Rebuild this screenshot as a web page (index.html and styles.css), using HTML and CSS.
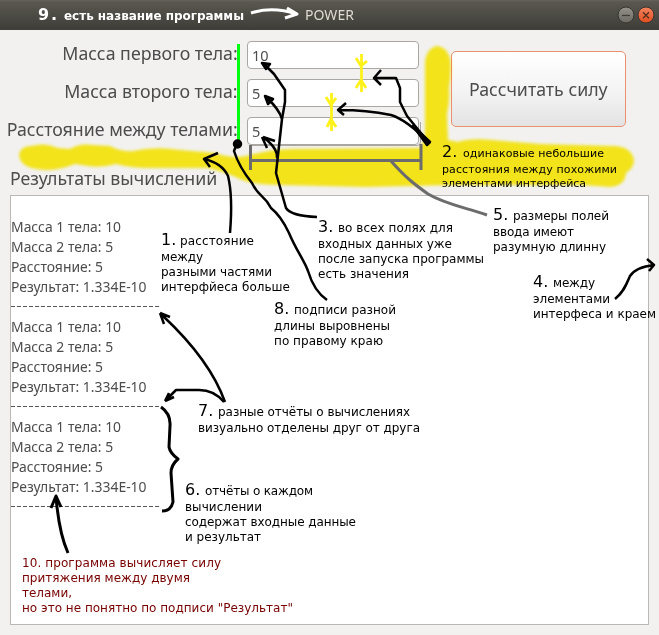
FILE: index.html
```html
<!DOCTYPE html>
<html lang="ru">
<head>
<meta charset="utf-8">
<title>POWER</title>
<link rel="stylesheet" href="styles.css">
</head>
<body>
<div class="window">
  <header class="titlebar">
    <span class="title">POWER</span>
    <svg class="controls" width="38" height="18" viewBox="0 0 38 18">
      <defs>
        <linearGradient id="grey" x2="0" y2="1"><stop stop-color="#94928b"/><stop offset="1" stop-color="#6b6962"/></linearGradient>
        <linearGradient id="orange" x2="0" y2="1"><stop stop-color="#f58461"/><stop offset="1" stop-color="#e04d1d"/></linearGradient>
      </defs>
      <circle cx="9" cy="9" r="8" fill="url(#grey)" stroke="#35342f"/>
      <path d="M5 9.5h8" stroke="#3c3b37" stroke-width="1.2"/>
      <circle cx="29" cy="9" r="8" fill="url(#orange)" stroke="#35342f"/>
      <path d="M26 6.2l6 6M32 6.2l-6 6" stroke="#51301f" stroke-width="1.3"/>
    </svg>
  </header>
  <main class="content">
    <div class="form">
      <div class="fields">
        <label class="label"><span class="wide">Масса первого тела:</span></label><div class="field">10</div>
        <label class="label"><span class="wide">Масса второго тела:</span></label><div class="field">5</div>
        <label class="label"><span class="wide">Расстояние между телами:</span></label><div class="field">5</div>
      </div>
      <button class="calculate"><span>Рассчитать силу</span></button>
    </div>
    <h2 class="heading"><span>Результаты вычислений</span></h2>
    <section class="results">
      <div class="report"><p>Масса 1 тела: 10</p><p>Масса 2 тела: 5</p><p>Расстояние: 5</p><p>Результат: 1.334E-10</p><hr></div>
      <div class="report"><p>Масса 1 тела: 10</p><p>Масса 2 тела: 5</p><p>Расстояние: 5</p><p>Результат: 1.334E-10</p><hr></div>
      <div class="report"><p>Масса 1 тела: 10</p><p>Масса 2 тела: 5</p><p>Расстояние: 5</p><p>Результат: 1.334E-10</p><hr></div>
    </section>
  </main>
  <svg class="marker" width="659" height="635" viewBox="0 0 659 635">
    <defs><filter id="soft" x="-10%" y="-10%" width="120%" height="120%"><feGaussianBlur stdDeviation="1.4"/></filter></defs>
    <g filter="url(#soft)" fill="#fff11a">
      <path d="M425 64C425 52 432 46 438 46Q446 47 450 58Q452 70 449 88Q450 102 447 114L448 140L458 142Q470 138 492 140L540 144L613 146Q631 146 634 160Q634 168 626 173Q625 186 610 187Q598 186 580 185L455 185L365 187L280 185Q254 185 240 179Q225 172 208 168L150 168Q130 168 116 164Q102 168 88 166L75 164Q60 170 46 170Q20 169 19 155Q20 146 32 146Q45 142 58 148L70 149Q80 143 92 145L110 146Q120 152 133 151Q155 146 180 150L215 153Q235 160 250 155Q275 148 300 149L420 148Q426 140 425 122Z"/>
    </g>
  </svg>
  <svg class="notes" width="659" height="635" viewBox="0 0 659 635">
    <g class="field-edges"><path d="M420.500 122V142Q420.500 145.500 417 145.500H252"/></g>
    <path class="green" d="M238.500 44V142"/>
    <g class="grey"><path d="M250.500 145V170M421 144V170M250 160.500H421M391 161C405 177 414 184 428 194C445 204 463 207 487 215"/></g>
    <g class="yellow">
      <path d="M361.500 54V92M356 58L361 66L367 61M356 88L361 80L366 88"/>
      <path d="M331.500 93V131M326 97L331 105L336 98M327 127L331 119L336 127"/>
    </g>
    <path class="white" d="M251 13Q273 6 296 14M287 8L297 14L285 18"/>
    <g class="ink">
      <path d="M429 143L407 116L400 102V88L396 78H375M381 70L374 78L381 85"/>
      <path d="M429 142Q405 119 391 115Q366 110 340 110M346 103L338 110L344 115"/>
      <path class="solid" d="M413 126L430 142L427 145Z"/>
      <path d="M317 217Q291 216 286 208L276 173L278 155L282 119L285 102V90L274 74L264 64M262 63l4 6 4-5z"/>
      <path d="M282 119Q279 109 267 98M265 96l3 8 5-5zM277 158Q278 150 268 141L264 138M262 137l5 11M263 137l12 4"/>
      <path d="M230 233Q233 196 228 176Q222 163 204 159M218 153L204 159L210 167"/>
      <circle class="solid" cx="237.500" cy="144" r="3.500"/>
      <path d="M236 146L234 151Q239 167 252 183C259 198 264 194 271 208Q281 216 289 233C296 250 304 260 308 271Q314 291 327 300"/>
      <path d="M225 402Q210 360 163 316M160 313L164 324M160 313L170 317M162 314l5 6"/>
      <path d="M224 402Q214 390 199 390H176L166 400M165 401L169 393M165 401L174 397"/>
      <path class="thick" d="M161 407Q171 414 170 426L169 447Q170 453 178 459Q171 465 171 473L173 502Q171 511 162 511"/>
      <path class="thick" d="M68 553Q59 533 56 497M51 508L56 496L61 507"/>
      <path d="M615 299C624 292 627 283 630 276Q636 267 654 265M647 259L654 265L649 271"/>
    </g>
    <g class="text">
      <g class="title-note"><text class="num" x="38" y="20" textLength="19">9.</text><text x="64" y="20" textLength="180">есть название программы</text></g>
      <text class="num" x="161" y="245">1.</text><text x="180" y="245" textLength="74">расстояние</text>
      <text x="161" y="261" textLength="42">между</text><text x="161" y="276" textLength="111">разными частями</text><text x="161" y="291" textLength="129">интерфйеса больше</text>
      <g class="small"><text class="num" x="442" y="157">2.</text><text x="463" y="157" textLength="141">одинаковые небольшие</text>
      <text x="442" y="173" textLength="175">расстояния между похожими</text><text x="442" y="187" textLength="144">элементами интерфейса</text></g>
      <text class="num" x="318" y="232">3.</text><text x="338" y="232" textLength="115">во всех полях для</text>
      <text x="318" y="248" textLength="134">входных данных уже</text><text x="318" y="263" textLength="166">после запуска программы</text><text x="318" y="278" textLength="91">есть значения</text>
      <text class="num" x="493" y="220">5.</text><text x="513" y="220" textLength="96">размеры полей</text>
      <text x="493" y="236" textLength="81">ввода имеют</text><text x="493" y="251" textLength="113">разумную длинну</text>
      <text class="num" x="533" y="287">4.</text><text x="553" y="287" textLength="42">между</text>
      <text x="533" y="303" textLength="77">элементами</text><text x="533" y="318" textLength="123">интерфеса и краем</text>
      <text class="num" x="274" y="314">8.</text><text x="294" y="314" textLength="102">подписи разной</text>
      <text x="274" y="330" textLength="116">длины выровнены</text><text x="274" y="345" textLength="109">по правому краю</text>
      <text class="num" x="198" y="416">7.</text><text x="218" y="416" textLength="192">разные отчёты о вычислениях</text>
      <text x="198" y="432" textLength="222">визуально отделены друг от друга</text>
      <text class="num" x="185" y="495">6.</text><text x="205" y="495" textLength="108">отчёты о каждом</text>
      <text x="185" y="511" textLength="77">вычислении</text><text x="185" y="526" textLength="171">содержат входные данные</text><text x="185" y="541" textLength="76">и результат</text>
      <g class="red"><text x="22" y="567" textLength="199">10. программа вычисляет силу</text><text x="22" y="582" textLength="168">притяжения между двумя</text><text x="22" y="597" textLength="50">телами,</text><text x="22" y="612" textLength="271">но это не понятно по подписи "Результат"</text></g>
    </g>
  </svg>
</div>
</body>
</html>
```
FILE: styles.css
```css
* { box-sizing: border-box; }
body { margin: 0; background: #2c2b35; font-family: "Noto Sans", sans-serif; color: #4c4c4c; }
.window { position: relative; width: 659px; height: 635px; overflow: hidden; background: #f2f1f0; }
.titlebar { display: grid; grid-template-columns: 1fr auto 1fr; align-items: center; height: 30px; padding-right: 4px; padding-left: 4px; background: linear-gradient(#66645b 0, #59574f 2px, #3e3d38); }
.title { grid-column: 2; font-size: 14px; line-height: 30px; color: #dfdbd2; }
.controls { justify-self: end; }
.content { padding: 11px 10px 10px; }
.form { display: flex; align-items: flex-start; height: 126px; }
.fields { display: grid; grid-template-columns: 229px 172px; grid-template-rows: 28px 28px 28px; column-gap: 9px; row-gap: 10px; }
.label { display: flex; justify-content: flex-end; font-size: 18.500px; line-height: 24px; white-space: nowrap; }
.wide { transform: scaleX(.96); transform-origin: right; }
.fields { margin-left: -1px; }
.field { padding: 0 4px; border: 1px solid #aaa6a2; border-radius: 4px; background: #fff; font-size: 14.500px; line-height: 26px; }
.calculate { width: 175px; height: 76px; margin: 10px 0 0 32px; padding: 0; border: 1.500px solid #e9906f; border-radius: 5px; background: linear-gradient(#fff, #f4f3f3 55%, #e4e3e3); color: #4c4c4c; font: 18.500px/70px "Noto Sans", sans-serif; white-space: nowrap; }
.calculate span { display: inline-block; transform: scaleX(.96); }
.heading { height: 28px; margin: 0; font-size: 18.500px; font-weight: 400; line-height: 21px; }
.heading span { display: inline-block; transform: scaleX(.96); transform-origin: left; }
.results { height: 430px; padding-top: 20px; border: 1px solid #bcb7b2; background: #fff; font-size: 14.500px; line-height: 20px; }
.report { width: 150px; height: 100px; transform: scaleX(.96); transform-origin: left; }
.report p { margin: 0; white-space: nowrap; }
.report hr { width: 156px; height: 1px; margin: 10px 0 0; border: 0; background: repeating-linear-gradient(90deg, #555 0 4.500px, transparent 4.500px 6.240px); }
.marker, .notes { position: absolute; top: 0; left: 0; }
.marker { mix-blend-mode: multiply; }
.notes path { fill: none; stroke-linejoin: round; }
.field-edges { stroke: #aaa6a2; }
.green { stroke: #0f1; stroke-width: 3; }
.grey { stroke: #6c6c6c; stroke-width: 3; }
.yellow { stroke: #fff11a; stroke-width: 2.800; }
.white { stroke: #fff; stroke-width: 3; }
.ink { stroke: #000; stroke-width: 2.500; }
.ink .thick { stroke-width: 3; }
.notes .solid { fill: #000; }
.text { font-family: "DejaVu Sans", sans-serif; font-size: 12px; fill: #000; }
.text .num { font-size: 16px; }
.small { font-size: 11px; }
.title-note { font-weight: 700; fill: #fff; }
.red { fill: #780000; }
```
